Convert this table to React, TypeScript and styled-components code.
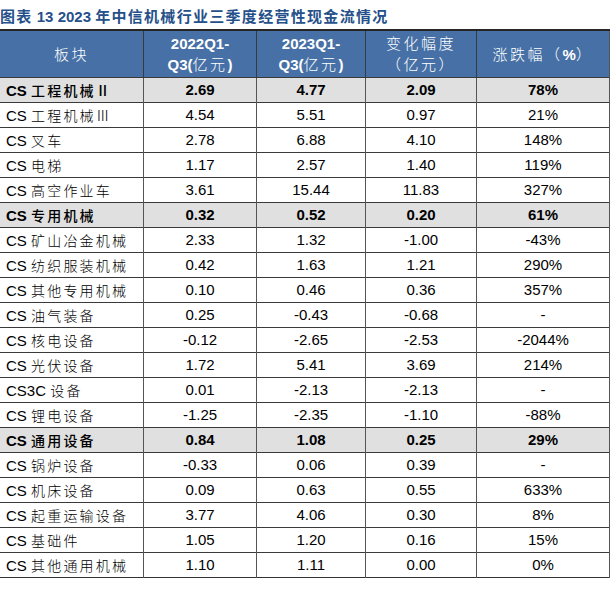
import React from "react";
import styled, { createGlobalStyle } from "styled-components";

const Global = createGlobalStyle`
  html, body { margin: 0; padding: 0; background: #ffffff; }
  body { font-family: "Liberation Sans", "Noto Sans CJK SC", sans-serif; }
`;

const Page = styled.div`
  width: 611px;
  height: 598px;
  background: #fff;
  overflow: hidden;
`;

const Title = styled.div`
  height: 29px;
  box-sizing: border-box;
  padding-top: 7px;
  font-family: "Liberation Sans", "Noto Sans CJK SC", sans-serif;
  font-weight: 700;
  font-size: 15px;
  line-height: 18px;
  color: #26508a;
  white-space: nowrap;
`;

const TitleCjk = styled.span`
  font-family: "Noto Sans CJK SC", sans-serif;
  font-weight: 600;
  letter-spacing: 1.3px;
`;

const Table = styled.table`
  width: 605px;
  border-collapse: collapse;
  table-layout: fixed;
  border-top: 2px solid #262626;
  border-bottom: 1px solid #333;
`;

const HeadCell = styled.th<{ $w: number }>`
  width: ${(p) => p.$w}px;
  height: 46px;
  padding: 0;
  background: #4771a6;
  color: #fff;
  font-weight: 400;
  font-size: 15px;
  line-height: 20px;
  text-align: center;
  border-right: 1px solid #3a3a3a;
  &:last-child { border-right: 1px solid #555; }
`;

const Latin = styled.span`
  font-family: "Liberation Sans", sans-serif;
  font-weight: 700;
`;

const Cjk = styled.span`
  font-family: "Noto Sans CJK SC", sans-serif;
  font-weight: 300;
  letter-spacing: 2.5px;
`;

const Row = styled.tr<{ $bold?: boolean }>`
  background: ${(p) => (p.$bold ? "#e0e0e0" : "#fff")};
  font-weight: ${(p) => (p.$bold ? 700 : 400)};
`;

const Cell = styled.td<{ $name?: boolean }>`
  height: 24px;
  padding: 0 ${(p) => (p.$name ? "6px" : "0")};
  font-size: 15px;
  line-height: 18px;
  color: #000;
  text-align: ${(p) => (p.$name ? "left" : "center")};
  border-top: 1px solid #3a3a3a;
  border-right: 1px solid #555;
  white-space: nowrap;
`;

const NameCjk = styled.span<{ $bold?: boolean }>`
  font-family: "Noto Sans CJK SC", sans-serif;
  font-weight: ${(p) => (p.$bold ? 500 : 300)};
  font-size: 14px;
  letter-spacing: 2.2px;
`;

type R = [string, string, string, string, string, string, boolean?];

const rows: R[] = [
  ["CS ", "工程机械Ⅱ", "2.69", "4.77", "2.09", "78%", true],
  ["CS ", "工程机械Ⅲ", "4.54", "5.51", "0.97", "21%"],
  ["CS ", "叉车", "2.78", "6.88", "4.10", "148%"],
  ["CS ", "电梯", "1.17", "2.57", "1.40", "119%"],
  ["CS ", "高空作业车", "3.61", "15.44", "11.83", "327%"],
  ["CS ", "专用机械", "0.32", "0.52", "0.20", "61%", true],
  ["CS ", "矿山冶金机械", "2.33", "1.32", "-1.00", "-43%"],
  ["CS ", "纺织服装机械", "0.42", "1.63", "1.21", "290%"],
  ["CS ", "其他专用机械", "0.10", "0.46", "0.36", "357%"],
  ["CS ", "油气装备", "0.25", "-0.43", "-0.68", "-"],
  ["CS ", "核电设备", "-0.12", "-2.65", "-2.53", "-2044%"],
  ["CS ", "光伏设备", "1.72", "5.41", "3.69", "214%"],
  ["CS3C ", "设备", "0.01", "-2.13", "-2.13", "-"],
  ["CS ", "锂电设备", "-1.25", "-2.35", "-1.10", "-88%"],
  ["CS ", "通用设备", "0.84", "1.08", "0.25", "29%", true],
  ["CS ", "锅炉设备", "-0.33", "0.06", "0.39", "-"],
  ["CS ", "机床设备", "0.09", "0.63", "0.55", "633%"],
  ["CS ", "起重运输设备", "3.77", "4.06", "0.30", "8%"],
  ["CS ", "基础件", "1.05", "1.20", "0.16", "15%"],
  ["CS ", "其他通用机械", "1.10", "1.11", "0.00", "0%"],
];

const widths = [143, 112, 108, 110, 132];

export default function App() {
  return (
    <Page>
      <Global />
      <Title>
        <TitleCjk>图表</TitleCjk> 13 2023 <TitleCjk>年中信机械行业三季度经营性现金流情况</TitleCjk>
      </Title>
      <Table>
        <thead>
          <tr>
            <HeadCell $w={widths[0]}>
              <Cjk>板块</Cjk>
            </HeadCell>
            <HeadCell $w={widths[1]}>
              <Latin>2022Q1-</Latin>
              <br />
              <Latin>Q3(</Latin>
              <Cjk>亿元</Cjk>
              <Latin>)</Latin>
            </HeadCell>
            <HeadCell $w={widths[2]}>
              <Latin>2023Q1-</Latin>
              <br />
              <Latin>Q3(</Latin>
              <Cjk>亿元</Cjk>
              <Latin>)</Latin>
            </HeadCell>
            <HeadCell $w={widths[3]}>
              <Cjk>变化幅度</Cjk>
              <br />
              <Cjk>（亿元）</Cjk>
            </HeadCell>
            <HeadCell $w={widths[4]}>
              <Cjk>涨跌幅（</Cjk>
              <Latin>%</Latin>
              <Cjk>）</Cjk>
            </HeadCell>
          </tr>
        </thead>
        <tbody>
          {rows.map((r, i) => (
            <Row key={i} $bold={r[6]}>
              <Cell $name>
                {r[0]}
                <NameCjk $bold={r[6]}>{r[1]}</NameCjk>
              </Cell>
              <Cell>{r[2]}</Cell>
              <Cell>{r[3]}</Cell>
              <Cell>{r[4]}</Cell>
              <Cell>{r[5]}</Cell>
            </Row>
          ))}
        </tbody>
      </Table>
    </Page>
  );
}
